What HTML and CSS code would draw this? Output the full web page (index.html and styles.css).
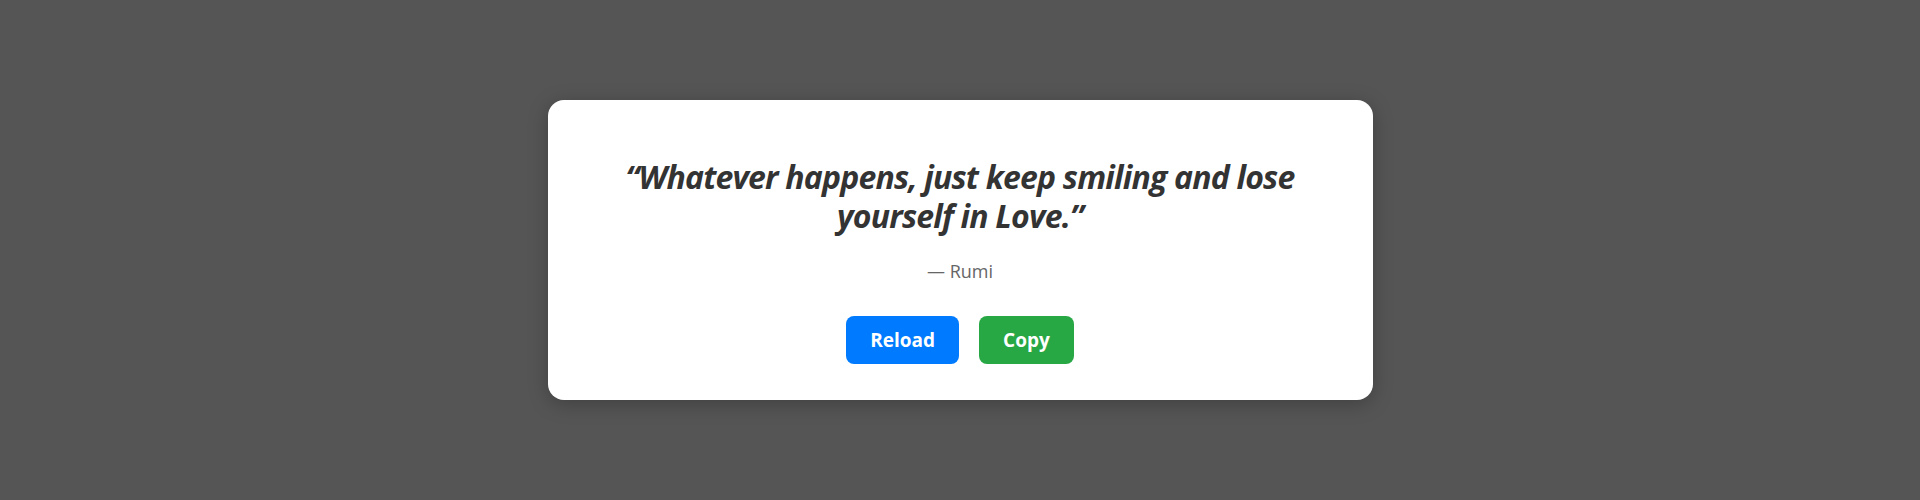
FILE: index.html
```html
<!DOCTYPE html>
<html lang="en">
<head>
<meta charset="utf-8">
<title>Quote</title>
<link rel="stylesheet" href="styles.css">
</head>
<body>
  <main class="card">
    <p class="quote">“Whatever happens, just keep smiling and lose yourself in Love.”</p>
    <p class="author">— Rumi</p>
    <div class="actions">
      <button class="btn btn-reload" type="button">Reload</button>
      <button class="btn btn-copy" type="button">Copy</button>
    </div>
  </main>
</body>
</html>
```
FILE: styles.css
```css
html, body {
  margin: 0;
  height: 100%;
}
body {
  background: #555555;
  display: flex;
  align-items: center;
  justify-content: center;
  font-family: "Open Sans", "Noto Sans", sans-serif;
  overflow: hidden;
}
.card {
  box-sizing: border-box;
  width: 825px;
  background: #ffffff;
  border-radius: 16px;
  padding: 58px 40px 36px;
  text-align: center;
  box-shadow: 0 4px 20px rgba(0, 0, 0, 0.25);
}
.quote {
  margin: 0 auto 24px;
  max-width: 700px;
  font-size: 32px;
  line-height: 38.4px;
  letter-spacing: -0.8px;
  font-style: italic;
  font-weight: 700;
  color: #333333;
}
.author {
  margin: 0 0 32px;
  font-size: 18px;
  line-height: 24.5px;
  color: #666666;
}
.actions {
  display: flex;
  justify-content: center;
  gap: 20px;
}
.btn {
  border: none;
  border-radius: 8px;
  padding: 12px 24px;
  font-family: inherit;
  font-size: 19px;
  line-height: 24px;
  font-weight: 700;
  color: #ffffff;
  cursor: pointer;
}
.btn-reload {
  background: #007bff;
}
.btn-copy {
  background: #28a745;
}
```
